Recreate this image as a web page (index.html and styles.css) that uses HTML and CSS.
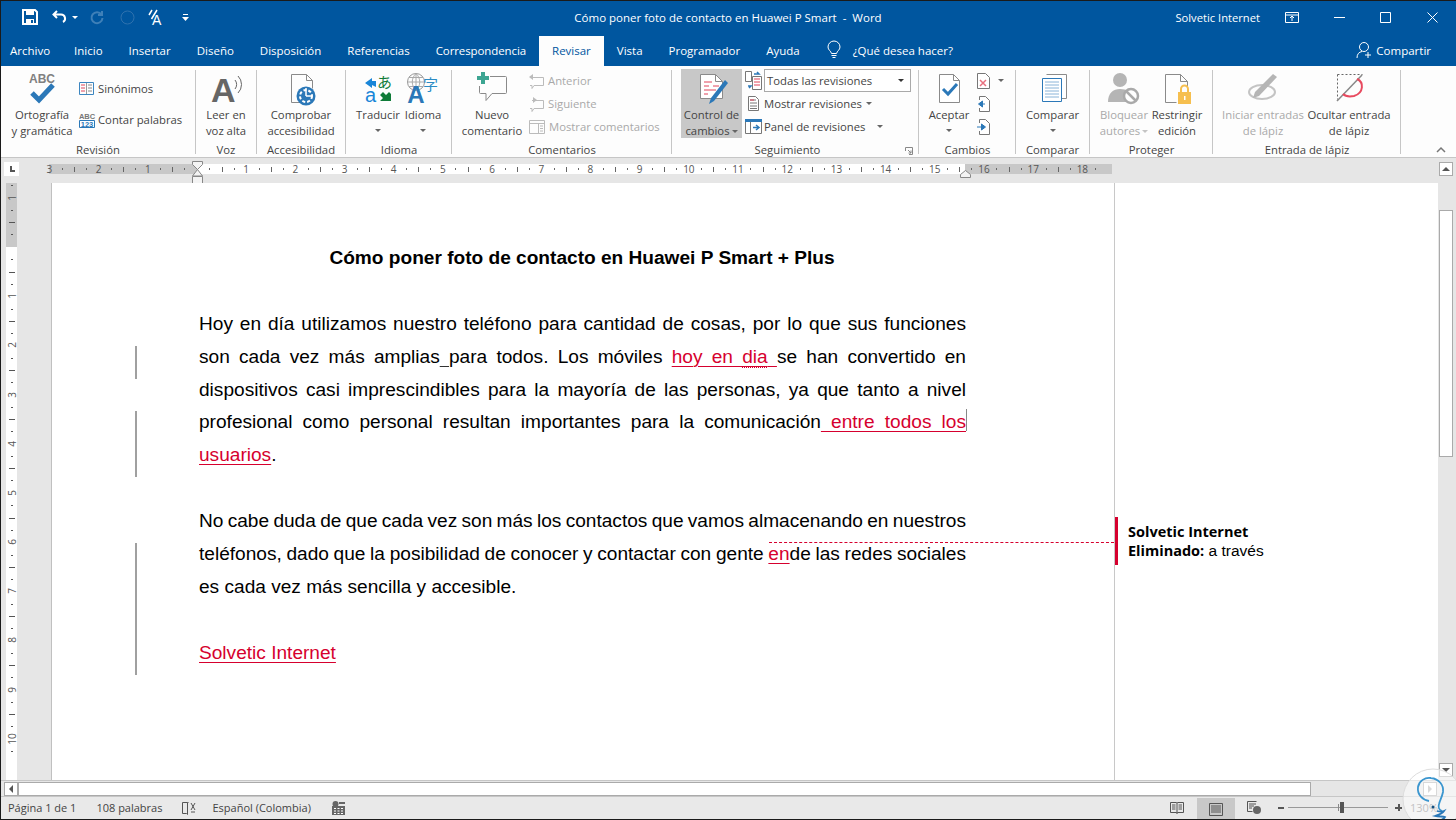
FILE: index.html
```html
<!DOCTYPE html>
<html lang="es">
<head>
<meta charset="utf-8">
<title>Word</title>
<link rel="stylesheet" href="styles.css">
</head>
<body>
<div class="app">
  <header class="titlebar">
    <div class="qat">
      <svg class="q-save" width="16" height="16" viewBox="0 0 16 16"><path d="M1 1h12l2 2v12H1z" fill="none" stroke="#fff" stroke-width="2"/><path d="M4 1h8v5H4zM4 10h8v5H4z" fill="#fff"/><path d="M9 11h2v3H9z" fill="#00569f"/></svg>
      <svg class="q-undo" width="16" height="14" viewBox="0 0 16 14"><path d="M5 1L1.500 4.500 5 8M2 4.500h7a4 4 0 0 1 2 7.500" fill="none" stroke="#fff" stroke-width="2"/></svg>
      <span class="caret white q-c1"></span>
      <svg class="q-redo" width="14" height="14" viewBox="0 0 14 14"><path d="M12 1v4H8M11.500 4.500A5.500 5.500 0 1 0 12.500 8" fill="none" stroke="#3f80b8" stroke-width="2"/></svg>
      <svg class="q-circle" width="15" height="15" viewBox="0 0 15 15"><circle cx="7.500" cy="7.500" r="6.500" fill="none" stroke="#2f72ae" stroke-width="1"/></svg>
      <svg class="q-touch" width="17" height="17" viewBox="0 0 17 17"><path d="M1 6l3-5M3.500 10L9 1" stroke="#fff" stroke-width="1.500"/><text x="4" y="16" class="q-a">A</text></svg>
      <svg class="q-more" width="7" height="7" viewBox="0 0 7 7"><path d="M1 0h5v1H1zM0 3h7L3.500 7z" fill="#fff"/></svg>
    </div>
    <div class="doc-title">Cómo poner foto de contacto en Huawei P Smart&nbsp; -&nbsp; Word</div>
    <div class="win">
      <span class="user">Solvetic Internet</span>
      <svg class="w-rib" width="14" height="11" viewBox="0 0 14 11"><path d="M.5.500h13v10H.5zM.5 3h13M7 9V4.500M5 6l2-2 2 2" fill="none" stroke="#fff"/></svg>
      <svg class="w-min" width="11" height="11" viewBox="0 0 11 11"><path d="M0 5.500h11" stroke="#fff"/></svg>
      <svg class="w-max" width="11" height="11" viewBox="0 0 11 11"><path d="M.5.500h10v10H.5z" fill="none" stroke="#fff"/></svg>
      <svg class="w-close" width="11" height="11" viewBox="0 0 11 11"><path d="M.5.500l10 10M10.500.500l-10 10" stroke="#fff"/></svg>
    </div>
  </header>

  <nav class="tabs">
    <span class="tab">Archivo</span>
    <span class="tab">Inicio</span>
    <span class="tab">Insertar</span>
    <span class="tab">Diseño</span>
    <span class="tab">Disposición</span>
    <span class="tab">Referencias</span>
    <span class="tab tab-corr">Correspondencia</span>
    <span class="tab active">Revisar</span>
    <span class="tab">Vista</span>
    <span class="tab">Programador</span>
    <span class="tab">Ayuda</span>
    <svg class="bulb" width="14" height="18" viewBox="0 0 14 18"><path d="M4.500 12.500C4 10 1 9 1 6a6 6 0 0 1 12 0c0 3-3 4-3.500 6.500zM4.500 14.500h5M5.500 16.500h3" fill="none" stroke="#fff"/></svg>
    <span class="tell">¿Qué desea hacer?</span>
    <span class="share">
      <svg width="17" height="18" viewBox="0 0 17 18"><circle cx="8" cy="6" r="4.500" fill="none" stroke="#fff"/><path d="M1 17c0-4 2-6 5-6.500M12 11v6M9 14h6" fill="none" stroke="#fff"/></svg>
      Compartir
    </span>
  </nav>

  <section class="ribbon">
    <div class="grp g-rev">
      <div class="rb">
        <div class="big w64">
          <svg class="ic" width="32" height="36" viewBox="0 0 32 36"><text x="16" y="11" class="t-abc">ABC</text><path d="M6 21l7 7L27 13" fill="none" stroke="#2b78b8" stroke-width="5"/></svg>
          <span>Ortografía<br>y gramática</span>
        </div>
        <div class="col col-rev">
          <div class="sm"><svg width="15" height="13" viewBox="0 0 15 13"><path d="M.5.500h14v12H.5z" fill="none" stroke="#3c86c0"/><path d="M7.500 1v11" stroke="#999"/><path d="M2 3h4M2 6h4M2 9h4" stroke="#e0455a"/><path d="M9 3h4M9 6h4M9 9h4" stroke="#888"/></svg><span>Sinónimos</span></div>
          <div class="sm"><svg width="16" height="16" viewBox="0 0 16 16"><text x="8" y="7" class="t-abc2">ABC</text><path d="M.5 8.500h15v7H.5z" fill="#fff" stroke="#2b78b8"/><text x="8" y="14.500" class="t-123">123</text></svg><span>Contar palabras</span></div>
        </div>
      </div>
      <div class="glabel">Revisión</div>
    </div>

    <div class="grp g-voz">
      <div class="rb">
        <div class="big wfull">
          <svg class="ic" width="32" height="36" viewBox="0 0 32 36"><text x="1" y="30" class="t-bigA">A</text><path d="M25 8a7 7 0 0 1 0 9M28 4a12 12 0 0 1 0 17" fill="none" stroke="#666"/></svg>
          <span>Leer en<br>voz alta</span>
        </div>
      </div>
      <div class="glabel">Voz</div>
    </div>

    <div class="grp g-acc">
      <div class="rb">
        <div class="big wfull">
          <svg class="ic" width="32" height="36" viewBox="0 0 32 36"><path d="M6.500 30.500V2.500h15l6 6v8M6.500 30.500h9M21.500 2.500v6h6" fill="none" stroke="#8a8a8a"/><circle cx="21" cy="24" r="9.500" fill="#2b78b8"/><circle cx="21" cy="24" r="6" fill="none" stroke="#fff" stroke-dasharray="3 2" stroke-width="2"/><path d="M21 16v8M21 24h6" stroke="#fff" stroke-width="1.500"/></svg>
          <span>Comprobar<br>accesibilidad</span>
        </div>
      </div>
      <div class="glabel">Accesibilidad</div>
    </div>

    <div class="grp g-idi">
      <div class="rb">
        <div class="big w44">
          <svg class="ic" width="32" height="36" viewBox="0 0 32 36"><path d="M3 11l7-5v3h4v6l-4-2v3z" fill="#1a86d8"/><text x="15" y="16" class="t-ja">あ</text><text x="3" y="30" class="t-a">a</text><path d="M29 29H18l3-3-3-3 3-3 3 3 3-3 2 2z" fill="#0f7b38"/></svg>
          <span>Traducir</span>
          <span class="caret c-line"></span>
        </div>
        <div class="big w46">
          <svg class="ic" width="34" height="36" viewBox="0 0 34 36"><circle cx="10" cy="10" r="8.500" fill="none" stroke="#999"/><path d="M1.500 10h17M10 1.500v17M3 5.500h14M3 14.500h14M10 1.500c-5 5-5 12 0 17M10 1.500c5 5 5 12 0 17" fill="none" stroke="#aaa"/><text x="10" y="31" class="t-bigA2">A</text><text x="17" y="18" class="t-zi">字</text></svg>
          <span>Idioma</span>
          <span class="caret c-line"></span>
        </div>
      </div>
      <div class="glabel">Idioma</div>
    </div>

    <div class="grp g-com">
      <div class="rb">
        <div class="big w64">
          <svg class="ic" width="34" height="36" viewBox="0 0 34 36"><path d="M15 4.500h15.500a1 1 0 0 1 1 1v15a1 1 0 0 1-1 1H17l-6 7v-7H5.500a1 1 0 0 1-1-1V14" fill="none" stroke="#8a8a8a"/><path d="M6 0h4v4h4v4h-4v4H6V8H2V4h4z" fill="#3da592"/></svg>
          <span>Nuevo<br>comentario</span>
        </div>
        <div class="col col-com">
          <div class="sm dis"><svg width="15" height="16" viewBox="0 0 15 16"><path d="M3 4.500h11.500v8H5l-2 3v-3H1" fill="none" stroke="#bbb"/><path d="M0 4l4-3v6z" fill="#bbb"/></svg><span>Anterior</span></div>
          <div class="sm dis"><svg width="15" height="16" viewBox="0 0 15 16"><path d="M3 4.500h11.500v8H5l-2 3v-3H1" fill="none" stroke="#bbb"/><path d="M8 4L4 1v6z" fill="#bbb"/></svg><span>Siguiente</span></div>
          <div class="sm dis"><svg width="16" height="14" viewBox="0 0 16 14"><path d="M.5.500h15v13H.5zM.5 3.500h15M9.500 3.500v10" fill="none" stroke="#bbb"/><path d="M11 6h3M11 8.500h3M11 11h3" stroke="#bbb"/></svg><span>Mostrar comentarios</span></div>
        </div>
      </div>
      <div class="glabel">Comentarios</div>
    </div>

    <div class="grp g-seg">
      <div class="rb">
        <div class="big w61 pressed">
          <svg class="ic" width="34" height="36" viewBox="0 0 34 36"><path d="M5.500 2.500h15l7 7v17h-22z" fill="#fff" stroke="#8a8a8a"/><path d="M20.500 2.500v7h7" fill="none" stroke="#8a8a8a"/><path d="M9 10h8M9 14h5M18 14h6M9 18h12M9 22h4" stroke="#e0455a"/><path d="M30 8L16 26l-2 6 5-3L33 11z" fill="#2b78b8"/></svg>
          <span>Control de<br>cambios<i class="caret c-inl"></i></span>
        </div>
        <div class="col col-seg">
          <div class="sm"><svg class="i-s" width="17" height="19" viewBox="0 0 17 19"><path d="M.5.500h6v10h-6zM7.500 5.500h9v13h-9z" fill="#fff" stroke="#777"/><path d="M9 8h6M9 11h6M9 14h6" stroke="#e0455a"/><path d="M9 3h5l-2-2M3 15h3l-2 2" fill="none" stroke="#2b78b8" stroke-width="1.500"/></svg>
            <div class="select">Todas las revisiones<span class="caret dark"></span></div></div>
          <div class="sm"><svg class="i-s" width="17" height="17" viewBox="0 0 17 17"><path d="M3.500 1.500h7l3 3v11h-10z" fill="#fff" stroke="#777"/><path d="M5 5h6M5 8h7M5 11h7M5 13.500h7" stroke="#777"/><path d="M5 5h4" stroke="#e0455a"/></svg><span>Mostrar revisiones</span><i class="caret c-inl"></i></div>
          <div class="sm"><svg class="i-s" width="17" height="15" viewBox="0 0 17 15"><path d="M.5 2.500h16v12H.5z" fill="#fff" stroke="#777"/><path d="M0 0h17v3H0z" fill="#2b78b8"/><path d="M5.500 3v11" stroke="#777"/><path d="M8 8.500h5M11 6l3 2.500-3 2.500" fill="none" stroke="#2b78b8" stroke-width="1.500"/></svg><span>Panel de revisiones</span><i class="caret c-far"></i></div>
        </div>
      </div>
      <div class="glabel gl-seg">Seguimiento</div>
      <svg class="launcher" width="8" height="8" viewBox="0 0 8 8"><path d="M.5 4V.5H7.500V7.500H4M3 3l3 3M6 3.500V6H3.500" fill="none" stroke="#888"/></svg>
    </div>

    <div class="grp g-cam">
      <div class="rb">
        <div class="big w50">
          <svg class="ic" width="30" height="36" viewBox="0 0 30 36"><path d="M5.500 2.500h14l6 6v22h-20z" fill="#fff" stroke="#8a8a8a"/><path d="M19.500 2.500v6h6" fill="none" stroke="#8a8a8a"/><path d="M9 17l5 5 9-10" fill="none" stroke="#2b78b8" stroke-width="3"/></svg>
          <span>Aceptar</span>
          <span class="caret c-line"></span>
        </div>
        <div class="col col-cam">
          <div class="sm"><svg width="13" height="16" viewBox="0 0 13 16"><path d="M.5.500h8l4 4v11H.500z" fill="#fff" stroke="#777"/><path d="M3 7l6 6M9 7l-6 6" stroke="#e8707f" stroke-width="1.500"/></svg><i class="caret c-cam"></i></div>
          <div class="sm"><svg width="13" height="16" viewBox="0 0 13 16"><path d="M2.500 4V.5h6l4 4v11h-10V12" fill="#fff" stroke="#777"/><path d="M8 8H3M5.500 5L1.500 8l4 3z" fill="#2b78b8" stroke="#2b78b8"/></svg></div>
          <div class="sm"><svg width="13" height="16" viewBox="0 0 13 16"><path d="M2.500 4V.5h6l4 4v11h-10V12" fill="#fff" stroke="#777"/><path d="M0 8h5M4.500 5l4 3-4 3z" fill="#2b78b8" stroke="#2b78b8"/></svg></div>
        </div>
      </div>
      <div class="glabel">Cambios</div>
    </div>

    <div class="grp g-cmp">
      <div class="rb">
        <div class="big wfull">
          <svg class="ic" width="30" height="36" viewBox="0 0 30 36"><path d="M8.500 2.500h20v24H24" fill="#fff" stroke="#8a8a8a"/><path d="M4.500 6.500h19v23h-19z" fill="#fff" stroke="#2b78b8"/><path d="M7 10h14M7 13h14M7 16h14M7 19h14M7 22h14M7 25h14" stroke="#8ab4d8"/></svg>
          <span>Comparar</span>
          <span class="caret c-line"></span>
        </div>
      </div>
      <div class="glabel">Comparar</div>
    </div>

    <div class="grp g-pro">
      <div class="rb">
        <div class="big w52 dis">
          <svg class="ic" width="34" height="36" viewBox="0 0 34 36"><circle cx="13" cy="8" r="7" fill="#b5b5b5"/><path d="M1 30c0-9 5-13 12-13s10 3 11 6l-4 7z" fill="#b5b5b5"/><circle cx="24" cy="24" r="7" fill="#fff" stroke="#aaa" stroke-width="2.500"/><path d="M19 19l10 10" stroke="#aaa" stroke-width="2.500"/></svg>
          <span>Bloquear<br>autores<i class="caret c-inl light"></i></span>
        </div>
        <div class="big w54">
          <svg class="ic" width="32" height="36" viewBox="0 0 32 36"><path d="M4.500 2.500h15l7 7v8M4.500 2.500v28h11M19.500 2.500v7h7" fill="none" stroke="#8a8a8a"/><path d="M17 20h13v12H17z" fill="#f6bf4f"/><path d="M20 20v-3a3.500 3.500 0 0 1 7 0v3" fill="none" stroke="#f6bf4f" stroke-width="2"/><path d="M23 24h1.500v4H23z" fill="#fff"/></svg>
          <span>Restringir<br>edición</span>
        </div>
      </div>
      <div class="glabel">Proteger</div>
    </div>

    <div class="grp g-lap">
      <div class="rb">
        <div class="big w84 dis">
          <svg class="ic" width="34" height="36" viewBox="0 0 34 36"><ellipse cx="16" cy="20" rx="13" ry="7" fill="none" stroke="#c4c4c4" stroke-width="2"/><path d="M27 2l4 3-18 19-6 2 2-6z" fill="#b5b5b5"/></svg>
          <span>Iniciar entradas<br>de lápiz</span>
        </div>
        <div class="big w88">
          <svg class="ic" width="34" height="36" viewBox="0 0 34 36"><path d="M5.500 2.500h25M5.500 2.500v25" fill="none" stroke="#666" stroke-dasharray="2 2"/><path d="M30 3L5 29" stroke="#888" stroke-width="1.500"/><path d="M25 7c7 3 7 14-3 17-5 1-9 0-11-2" fill="none" stroke="#e84a5f" stroke-width="2"/></svg>
          <span>Ocultar entrada<br>de lápiz</span>
        </div>
      </div>
      <div class="glabel">Entrada de lápiz</div>
    </div>

    <svg class="collapse" width="10" height="6" viewBox="0 0 10 6"><path d="M1 5l4-4 4 4" fill="none" stroke="#777" stroke-width="1.500"/></svg>
  </section>

  <section class="rulerbar">
    <div class="tabstop"><span></span></div>
    <div class="hruler">
      <div class="hcells">
        <span class="rc rc-first">3</span><span class="rc">2</span><span class="rc">1</span><span class="rc"></span><span class="rc">1</span><span class="rc">2</span><span class="rc">3</span><span class="rc">4</span><span class="rc">5</span><span class="rc">6</span><span class="rc">7</span><span class="rc">8</span><span class="rc">9</span><span class="rc">10</span><span class="rc">11</span><span class="rc">12</span><span class="rc">13</span><span class="rc">14</span><span class="rc">15</span><span class="rc">16</span><span class="rc">17</span><span class="rc">18</span>
      </div>
      <svg class="ind-l" width="11" height="23" viewBox="0 0 11 23"><path d="M.5.500h10v3L5.500 8.500.5 3.500zM5.500 8.500l5 6.500H.5zM.5 15.500h10v7H.5z" fill="#f4f4f4" stroke="#888"/></svg>
      <svg class="ind-r" width="11" height="8" viewBox="0 0 11 8"><path d="M.5 7.500v-3l5-4 5 4v3z" fill="#f4f4f4" stroke="#888"/></svg>
    </div>
    <div class="sb-up"><span class="tri up"></span></div>
  </section>

  <main class="main">
    <div class="gutter">
      <div class="vruler">
        <div class="vcells">
          <span class="vc"><b>1</b></span><span class="vc"></span><span class="vc"><b>1</b></span><span class="vc"><b>2</b></span><span class="vc"><b>3</b></span><span class="vc"><b>4</b></span><span class="vc"><b>5</b></span><span class="vc"><b>6</b></span><span class="vc"><b>7</b></span><span class="vc"><b>8</b></span><span class="vc"><b>9</b></span><span class="vc"><b>10</b></span>
        </div>
      </div>
    </div>
    <article class="page">
      <h1 class="doc-h">Cómo poner foto de contacto en Huawei P Smart + Plus</h1>
      <p class="para">
        <span class="ln">Hoy en día utilizamos nuestro teléfono para cantidad de cosas, por lo que sus funciones</span>
        <span class="ln chg">son cada vez más amplias<u class="blk"> </u>para todos. Los móviles <ins class="rev">hoy en <span class="wavy">dia</span> </ins>se han convertido en</span>
        <span class="ln">dispositivos casi imprescindibles para la mayoría de las personas, ya que tanto a nivel</span>
        <span class="ln chg caret-end">profesional como personal resultan importantes para la comunicación<ins class="rev"> entre todos los</ins></span>
        <span class="ln last chg"><ins class="rev">usuarios</ins>.</span>
      </p>
      <p class="para p-tight">
        <span class="ln fit">No cabe duda de que cada vez son más los contactos que vamos almacenando en nuestros</span>
        <span class="ln chg fit">teléfonos, dado que la posibilidad de conocer y contactar con gente <ins class="rev">en</ins>de las redes sociales</span>
        <span class="ln last chg">es cada vez más sencilla y accesible.</span>
        <span class="ln last chg blank"></span>
      </p>
      <p class="para p-tight">
        <span class="ln last chg"><ins class="rev">Solvetic Internet</ins></span>
      </p>
      <div class="leader"></div>
    </article>
    <aside class="markup">
      <div class="balloon">
        <strong class="b-author">Solvetic Internet</strong>
        <span class="b-text"><strong class="b-author">Eliminado:</strong> a través</span>
      </div>
    </aside>
    <div class="vscroll">
      <div class="sb-thumb"></div>
      <div class="sb-down"><span class="tri down"></span></div>
    </div>
  </main>

  <section class="hscroll">
    <div class="hs-btn"><span class="tri left"></span></div>
    <div class="hs-thumb"></div>
    <div class="hs-btn hs-right"><span class="tri right"></span></div>
  </section>

  <footer class="status">
    <span class="st st-page">Página 1 de 1</span>
    <span class="st st-words">108 palabras</span>
    <svg class="st-book" width="14" height="14" viewBox="0 0 14 14"><path d="M5.500 1.500h-5v11h4l1 1V1.500zM5.500 1.500h1" fill="none" stroke="#555"/><path d="M9 2l4 7M13 2L9 9M9 11h4" stroke="#555" fill="none"/></svg>
    <span class="st st-lang">Español (Colombia)</span>
    <svg class="st-macro" width="13" height="14" viewBox="0 0 13 14"><circle cx="3.500" cy="3" r="3" fill="#666"/><path d="M7 1h6v2H7zM0 5h13v9H0z" fill="#666"/><path d="M2 7h2v1H2zM5.500 7h2v1h-2zM9 7h2v1H9zM2 9.500h2v1H2zM5.500 9.500h2v1h-2zM9 9.500h2v1H9zM2 12h2v1H2zM5.500 12h2v1h-2zM9 12h2v1H9z" fill="#fff"/></svg>
    <div class="st-right">
      <svg class="v-read" width="14" height="14" viewBox="0 0 14 14"><path d="M.5 1.500h6l.5 1 .5-1h6v10h-6l-.5 1-.5-1h-6zM7 2.500v10" fill="none" stroke="#555"/><path d="M2 4h3.500M2 6h3.500M2 8h3.500M8.500 4H12M8.500 6H12M8.500 8H12" stroke="#555"/></svg>
      <div class="v-print"><svg width="14" height="13" viewBox="0 0 14 13"><path d="M.5.500h13v12H.5z" fill="none" stroke="#555"/><path d="M2 3h10M2 5h10M2 7h10M2 9h10" stroke="#555"/></svg></div>
      <svg class="v-web" width="14" height="13" viewBox="0 0 14 13"><path d="M.5.500h9M.5.500v10h5" fill="none" stroke="#555"/><path d="M2 3h7M2 5h5M2 7h3" stroke="#555"/><circle cx="10" cy="9" r="4" fill="#666"/></svg>
      <span class="z-btn z-minus"></span>
      <div class="slider"><span class="s-mid"></span><span class="s-thumb"></span></div>
      <span class="z-btn z-plus"></span>
      <span class="st st-zoom">130%</span>
    </div>
    <div class="wm">
      <svg width="62" height="64" viewBox="0 0 62 64"><circle cx="31" cy="34" r="30" fill="#fff" fill-opacity=".55" stroke="#ddd"/><path d="M27 36C21 35 15 30 16 22c1-6 7-10 13-9 8 1 13 7 12 14-1 5-3 8-4 12-1 3 0 6 3 7" fill="none" stroke="#3b96cf" stroke-width="1.800"/><path d="M35 46c4 1 5 1 7 0-2 3-6 4-9 5 4 1 8 0 10 1-2 3-6 4-10 3" fill="none" stroke="#2a78b8" stroke-width="1.800"/><circle cx="31" cy="42" r="1.500" fill="#14507f"/></svg>
    </div>
  </footer>
</div>
</body>
</html>
```
FILE: styles.css
```css
* { box-sizing: border-box; }
html, body { margin: 0; height: 100%; overflow: hidden; }
body { background: #fff; font-family: "Open Sans", "Noto Sans", sans-serif; font-size: 11.5px; color: #444; }
svg { display: block; flex: none; overflow: visible; }

.app {
  position: relative;
  width: 1456px; height: 820px;
  display: grid;
  grid-template-rows: 36px 30px 92px 25px 597px 16px 24px;
}
.app::after {
  content: ""; position: absolute; inset: 0;
  border: 1px solid #1a1a1a; border-right: 0;
  pointer-events: none;
}

.caret { display: inline-block; width: 0; height: 0; border-left: 3px solid transparent; border-right: 3px solid transparent; border-top: 3px solid #666; }
.caret.white { border-top-color: #fff; }
.caret.dark { border-top-color: #333; }
.caret.light { border-top-color: #c4c4c4; }

/* title bar */
.titlebar { background: #00569f; color: #fff; display: grid; grid-template-columns: 1fr auto 1fr; align-items: center; padding-bottom: 2px; }
.qat { display: flex; align-items: center; padding-left: 22px; }
.q-undo { margin-left: 14px; }
.q-c1 { margin-left: 4px; }
.q-redo { margin-left: 12px; }
.q-circle { margin-left: 16px; }
.q-touch { margin-left: 13px; }
.q-a { font: 14px "Liberation Sans", sans-serif; fill: #fff; }
.q-more { margin-left: 17px; }
.doc-title { font-size: 11.5px; white-space: pre; }
.win { display: flex; align-items: center; justify-content: flex-end; padding-right: 18px; }
.user { font-size: 11.2px; margin-right: 25px; }
.w-min { margin-left: 35px; }
.w-max { margin-left: 35px; }
.w-close { margin-left: 36px; }

/* tabs */
.tabs { background: #00569f; color: #fff; display: flex; align-items: stretch; padding-left: 0; }
.tab { display: flex; align-items: center; padding: 0 13px 2px; white-space: nowrap; }
.tab:first-child { padding-left: 10px; padding-right: 11px; }
.tab-corr { letter-spacing: -.1px; }
.tab.active { background: #fdfdfd; color: #00569f; }
.bulb { align-self: center; margin-left: 14px; margin-bottom: 2px; }
.tell { align-self: center; margin-left: 12px; margin-bottom: 2px; }
.share { align-self: center; margin-left: auto; margin-right: 25px; margin-bottom: 2px; display: flex; align-items: center; gap: 3px; }

/* ribbon */
.ribbon { background: #fdfdfd; border-bottom: 1px solid #c6c6c6; display: flex; position: relative; padding-top: 2px; font-size: 11.300px; }
.grp { position: relative; display: flex; flex-direction: column; height: 88px; flex: none; }
.grp::after { content: ""; position: absolute; right: 0; top: 2px; bottom: 2px; width: 1px; background: #c6c6c6; }
.g-rev { width: 196px; padding-left: 10px; }
.g-voz { width: 61px; }
.g-acc { width: 89px; }
.g-idi { width: 106px; padding-left: 10px; }
.g-com { width: 220px; padding-left: 8px; }
.g-seg { width: 247px; padding-left: 9px; }
.g-cam { width: 97px; padding-left: 5px; }
.g-cmp { width: 74px; }
.g-pro { width: 123px; padding-left: 8px; }
.g-lap { width: 188px; padding-left: 8px; }
.g-voz, .g-acc, .g-cmp { padding-right: 1px; }

.rb { display: flex; flex: none; height: 73px; }
.glabel { flex: none; height: 17px; line-height: 17px; text-align: center; margin-left: -10px; }
.g-voz .glabel, .g-acc .glabel, .g-cmp .glabel { margin-left: 0; }
.g-com .glabel, .g-pro .glabel, .g-lap .glabel { margin-left: -8px; }
.g-cam .glabel { margin-left: -5px; }
.g-seg .gl-seg { margin-left: -9px; padding-right: 16px; }

.big { display: flex; flex-direction: column; align-items: center; text-align: center; line-height: 16px; white-space: nowrap; padding-top: 2px; height: 69px; flex: none; }
.big .ic { height: 36px; margin-top: 2px; margin-bottom: -1px; }
.wfull { width: 100%; }
.w44 { width: 44px; } .w46 { width: 46px; } .w50 { width: 50px; } .w52 { width: 52px; } .w54 { width: 54px; }
.w61 { width: 61px; } .w64 { width: 64px; } .w84 { width: 84px; } .w88 { width: 88px; }
.pressed { background: #c8c8c8; margin-top: 1px; }
.big.pressed .ic { margin-top: 1px; }
.c-line { margin-top: 6px; }
.c-inl { margin-left: 2px; vertical-align: 2px; }
.c-far { margin-left: 10px; }
.c-cam { margin-left: 5px; }
.launcher { position: absolute; right: 6px; bottom: 1px; }
.dis { color: #a9a9a9; }

.col { display: flex; flex-direction: column; }
.col-rev { margin-left: 5px; padding-top: 9px; gap: 8px; }
.col-rev .sm:first-child { gap: 4px; }
.col-com { margin-left: 5px; padding-top: 1px; }
.col-com .sm { gap: 4px; }
.col-seg { margin-left: 3px; padding-top: 1px; }
.col-cam { margin-left: 3px; padding-top: 1px; }
.sm { height: 23px; display: flex; align-items: center; gap: 3px; white-space: nowrap; }
.col-seg .sm { gap: 2px; }
.select { width: 147px; height: 23px; border: 1px solid #a9a9a9; background: #fff; display: flex; align-items: center; justify-content: space-between; padding: 0 6px 0 2px; }

/* svg text */
.t-abc { font: bold 12px "Liberation Sans", sans-serif; fill: #808080; text-anchor: middle; }
.t-abc2 { font: bold 7.500px "Liberation Sans", sans-serif; fill: #777; text-anchor: middle; }
.t-123 { font: bold 7.500px "Liberation Sans", sans-serif; fill: #2b78b8; text-anchor: middle; }
.t-bigA { font: bold 34px "Liberation Sans", sans-serif; fill: #666; }
.t-ja { font: 15px "Noto Sans CJK JP", sans-serif; fill: #0f7b38; }
.t-a { font: 20px "Liberation Sans", sans-serif; fill: #1a86d8; }
.t-bigA2 { font: bold 24px "Liberation Sans", sans-serif; fill: #2b78b8; text-anchor: middle; }
.t-zi { font: 15px "Noto Sans CJK JP", sans-serif; fill: #2b8bc4; }
.collapse { position: absolute; right: 10px; bottom: 4px; }

/* rulers */
.rulerbar { background: #e6e6e6; position: relative; display: block; padding-top: 6px; }
.tabstop { position: absolute; left: 4px; top: 4px; width: 15px; height: 14px; background: #fff; }
.tabstop span { position: absolute; left: 6px; top: 4px; width: 5px; height: 6px; border-left: 2px solid #555; border-bottom: 2px solid #555; }
.hruler {
  position: relative;
  margin-left: 49px; width: 1063px; height: 10px;
  background: linear-gradient(90deg, #c8c8c8 0 148px, #fff 148px 916px, #c8c8c8 916px);
}
.hcells { display: flex; margin-left: -24.200px; }
.rc {
  flex: none; width: 49.200px; height: 10px;
  font-size: 10px; line-height: 10px; text-align: center; color: #555;
  font-family: "Open Sans", sans-serif;
  background:
    linear-gradient(#666,#666) 12px 50% / 1px 2px no-repeat,
    linear-gradient(#666,#666) 37px 50% / 1px 2px no-repeat,
    linear-gradient(#666,#666) 0 50% / 1px 5px no-repeat;
}
.rc-first { background: linear-gradient(#666,#666) 37px 50% / 1px 2px no-repeat; }
.ind-l { position: absolute; left: 143px; top: -3px; }
.ind-r { position: absolute; left: 911px; top: 6px; }
.sb-up { position: absolute; right: 3px; top: 4px; width: 14px; height: 14px; background: #fff; border: 1px solid #aaa; display: flex; align-items: center; justify-content: center; }
.tri { display: block; width: 0; height: 0; }
.tri.up { border-left: 4px solid transparent; border-right: 4px solid transparent; border-bottom: 4px solid #555; }
.tri.down { border-left: 4px solid transparent; border-right: 4px solid transparent; border-top: 4px solid #555; }
.tri.left { border-top: 4px solid transparent; border-bottom: 4px solid transparent; border-right: 4px solid #555; }
.tri.right { border-top: 4px solid transparent; border-bottom: 4px solid transparent; border-left: 4px solid #aaa; }

/* main */
.main { display: grid; grid-template-columns: 52px 1062px 324px 18px; overflow: hidden; min-height: 0; }
.gutter { background: #e6e6e6; border-right: 1px solid #c0c0c0; padding-left: 6px; }
.vruler {
  width: 11px; height: 100%; overflow: hidden;
  background: linear-gradient(180deg, #c8c8c8 0 64px, #fff 64px);
}
.vcells { margin-top: -9.800px; display: flex; flex-direction: column; }
.vc {
  flex: none; height: 49.200px; width: 11px; display: flex; align-items: center; justify-content: center;
  background:
    linear-gradient(#555,#555) 50% 12px / 2px 1px no-repeat,
    linear-gradient(#555,#555) 50% 37px / 2px 1px no-repeat,
    linear-gradient(#555,#555) 50% 0 / 6px 1px no-repeat;
}
.vc b { font-weight: 400; font-size: 10px; line-height: 10px; color: #555; transform: rotate(-90deg); }

.page { position: relative; background: #fff; padding: 59px 148px 0 147px; color: #000; font-family: "Liberation Sans", Arial, sans-serif; font-size: 19.100px; line-height: 32.900px; }
.doc-h { margin: 0 0 32.900px; font-size: 19.100px; line-height: 32.900px; font-weight: 700; text-align: center; margin-left: -1px; }
.para { margin: 0 0 32.900px; width: 767px; }
.p-tight { margin: 0; }
.ln { display: block; position: relative; text-align: justify; text-align-last: justify; white-space: normal; height: 32.900px; }
.ln.last { text-align-last: left; }
.fit { word-spacing: -3px; }
.chg::before { content: ""; position: absolute; left: -64px; top: 5px; width: 2px; height: 33px; background: #a0a0a0; }
.rev { color: #d6002e; text-decoration: underline; text-decoration-color: #d6002e; text-decoration-thickness: 1px; text-underline-offset: 3px; }
.blk { text-decoration-color: #333; text-decoration-thickness: 1px; text-underline-offset: 3px; }
.wavy { position: relative; }
.wavy::after { content: ""; position: absolute; left: 0; right: 0; bottom: -1px; height: 2px; background: repeating-linear-gradient(90deg, #d6002e 0 1px, transparent 1px 2px); }
.caret-end::after { content: ""; position: absolute; right: -1px; top: 3px; width: 1px; height: 22px; background: #888; }
.leader { position: absolute; left: 717px; right: 0; top: 359px; border-top: 1px dashed #d6002e; }

.markup { background: #fff; border-left: 1px solid #c8c8c8; padding-top: 334px; margin-left: 0; }
.balloon { border-left: 3px solid #d6002e; margin-left: 0; height: 48px; padding: 6px 0 0 10px; display: flex; flex-direction: column; font-size: 15.500px; line-height: 18.500px; color: #000; font-family: "Liberation Sans", Arial, sans-serif; }
.b-author { font-family: "Open Sans", sans-serif; font-weight: 700; font-size: 14.500px; }

.vscroll { background: #e6e6e6; position: relative; padding: 27px 3px 0 1px; }
.sb-thumb { height: 247px; background: #fff; border: 1px solid #aaa; }
.sb-down { position: absolute; right: 3px; bottom: 3px; width: 14px; height: 14px; background: #fff; border: 1px solid #aaa; display: flex; align-items: center; justify-content: center; }

/* horizontal scrollbar */
.hscroll { background: #e6e6e6; display: flex; align-items: stretch; padding: 1px 0 0 4px; border-top: 1px solid #c6c6c6; }
.hs-btn { width: 14px; height: 14px; background: #fff; border: 1px solid #aaa; display: flex; align-items: center; justify-content: center; flex: none; }
.hs-thumb { width: 1293px; background: #fff; border: 1px solid #aaa; height: 14px; flex: none; }
.hs-right { margin-left: 112px; }

/* status */
.status { background: #e9e9e9; border-top: 1px solid #c6c6c6; display: flex; align-items: center; position: relative; padding: 0 0 2px 8px; font-size: 11px; color: #444; }
.st { white-space: nowrap; }
.st-words { margin-left: 20px; }
.st-book { margin-left: 20px; }
.st-lang { margin-left: 16px; }
.st-macro { margin-left: 21px; }
.st-right { margin-left: auto; display: flex; align-items: center; align-self: stretch; padding-right: 18px; margin-bottom: -2px; padding-bottom: 2px; }
.v-print { width: 38px; align-self: stretch; background: #c8c8c8; display: flex; align-items: center; justify-content: center; margin: 1px 0 -2px 13px; }
.v-web { margin-left: 12px; }
.z-btn { position: relative; width: 6px; height: 2px; background: #555; }
.z-minus { margin-left: 17px; }
.z-plus { margin-left: 7px; width: 7px; }
.z-plus::after { content: ""; position: absolute; left: 2.500px; top: -2.500px; width: 2px; height: 7px; background: #555; }
.slider { position: relative; width: 100px; height: 1px; background: #999; margin-left: 4px; }
.s-mid { position: absolute; left: 50px; top: -3px; width: 1px; height: 7px; background: #888; }
.s-thumb { position: absolute; left: 52px; top: -5px; width: 4px; height: 11px; background: #555; }
.st-zoom { margin-left: 8px; color: #777; }
.wm { position: absolute; left: 1402px; top: -32px; pointer-events: none; }
```
